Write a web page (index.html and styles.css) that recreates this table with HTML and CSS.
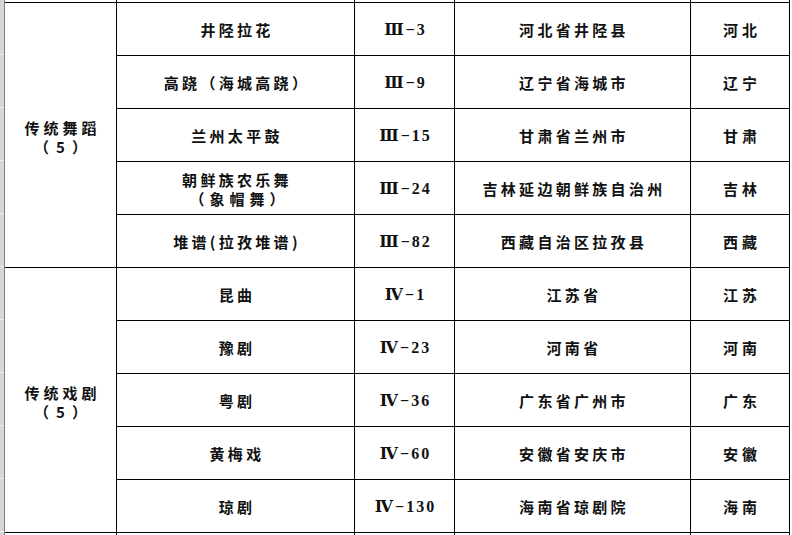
FILE: index.html
```html
<!DOCTYPE html>
<html lang="zh">
<head>
<meta charset="utf-8">
<title>非物质文化遗产名录</title>
<link rel="stylesheet" href="styles.css">
</head>
<body>
<div class="page">
  <div class="gutter">
    <div class="gh top"></div>
    <div class="gh"></div><div class="gh"></div><div class="gh"></div><div class="gh"></div><div class="gh"></div>
    <div class="gh"></div><div class="gh"></div><div class="gh"></div><div class="gh"></div><div class="gh"></div>
  </div>
  <div class="sheet">
    <div class="c stub"></div><div class="c stub"></div><div class="c stub"></div><div class="c stub"></div><div class="c stub"></div>

    <div class="c group"><span class="gt">传统舞蹈</span><span class="gn">（5）</span></div>
    <div class="c name">井陉拉花</div><div class="c code">Ⅲ−3</div><div class="c place">河北省井陉县</div><div class="c prov">河北</div>
    <div class="c name">高跷（海城高跷）</div><div class="c code">Ⅲ−9</div><div class="c place">辽宁省海城市</div><div class="c prov">辽宁</div>
    <div class="c name">兰州太平鼓</div><div class="c code">Ⅲ−15</div><div class="c place">甘肃省兰州市</div><div class="c prov">甘肃</div>
    <div class="c name two"><span>朝鲜族农乐舞</span><span class="sub">（象帽舞）</span></div><div class="c code">Ⅲ−24</div><div class="c place">吉林延边朝鲜族自治州</div><div class="c prov">吉林</div>
    <div class="c name">堆谱(拉孜堆谱)</div><div class="c code">Ⅲ−82</div><div class="c place">西藏自治区拉孜县</div><div class="c prov">西藏</div>

    <div class="c group"><span class="gt">传统戏剧</span><span class="gn">（5）</span></div>
    <div class="c name">昆曲</div><div class="c code">Ⅳ−1</div><div class="c place">江苏省</div><div class="c prov">江苏</div>
    <div class="c name">豫剧</div><div class="c code">Ⅳ−23</div><div class="c place">河南省</div><div class="c prov">河南</div>
    <div class="c name">粤剧</div><div class="c code">Ⅳ−36</div><div class="c place">广东省广州市</div><div class="c prov">广东</div>
    <div class="c name">黄梅戏</div><div class="c code">Ⅳ−60</div><div class="c place">安徽省安庆市</div><div class="c prov">安徽</div>
    <div class="c name">琼剧</div><div class="c code">Ⅳ−130</div><div class="c place">海南省琼剧院</div><div class="c prov">海南</div>

    <div class="c tail"></div><div class="c tail"></div><div class="c tail"></div><div class="c tail"></div><div class="c tail"></div>
  </div>
</div>
</body>
</html>
```
FILE: styles.css
```css
html, body {
  margin: 0;
  padding: 0;
  background: #ffffff;
  overflow: hidden;
}
.page {
  display: flex;
  width: 792px;
  height: 535px;
  overflow: hidden;
}
.gutter {
  width: 4px;
  flex: none;
  background: #d6d6d6;
  display: flex;
  flex-direction: column;
}
.gh {
  height: 52px;
  flex: none;
  border-bottom: 1px solid #f0f0f0;
}
.gh.top {
  height: 2px;
  border-bottom: none;
}
.sheet {
  flex: none;
  border-left: 1px solid #808080;
  display: grid;
  grid-template-columns: 112px 238px 100px 236px 99px;
  grid-template-rows: 3px repeat(10, 53px) 20px;
  font-family: "Noto Sans CJK SC", "Noto Sans", sans-serif;
  font-weight: 700;
  font-size: 15px;
  color: #111;
}
.c {
  box-sizing: border-box;
  border-right: 1px solid #000;
  border-bottom: 1px solid #000;
  display: flex;
  flex-direction: column;
  align-items: center;
  justify-content: center;
  letter-spacing: 3px;
  padding-left: 3px;
  line-height: 19px;
  white-space: nowrap;
}
.tail {
  border-bottom: none;
}
.group {
  grid-row: span 5;
  padding-left: 0;
  padding-top: 4px;
}
.gt {
  letter-spacing: 4px;
  padding-left: 4px;
}
.gn {
  letter-spacing: 7px;
  padding-left: 7px;
}
.two {
  padding-top: 2px;
}
.sub {
  letter-spacing: 5px;
  padding-left: 5px;
}
.name {
  letter-spacing: 3.3px;
}
.code {
  font-family: "Liberation Serif", "DejaVu Serif", serif;
  font-size: 16px;
  letter-spacing: 2px;
  padding-left: 2px;
}
.place {
  letter-spacing: 3.3px;
}
.prov {
  letter-spacing: 4px;
  padding-left: 4px;
}
```
